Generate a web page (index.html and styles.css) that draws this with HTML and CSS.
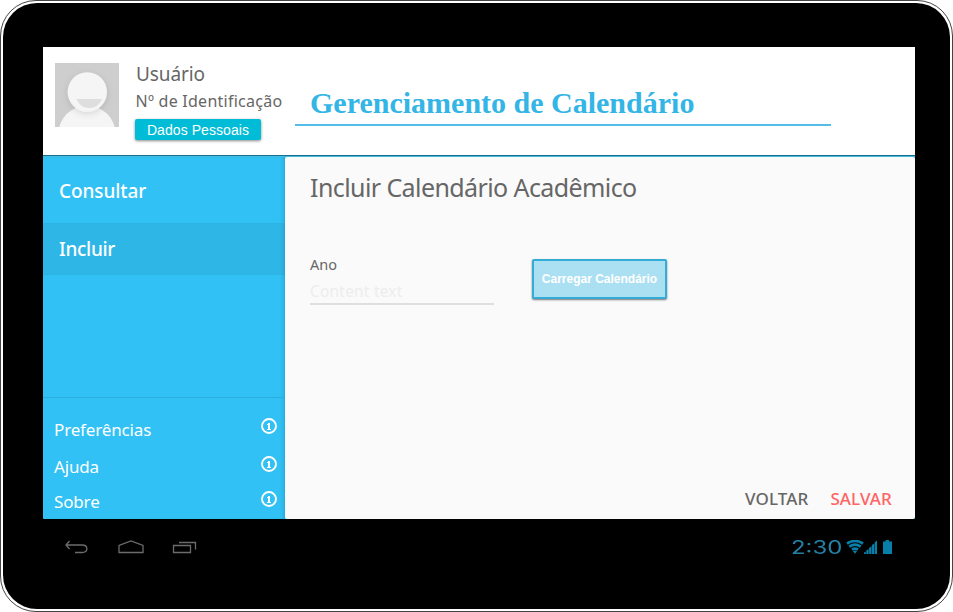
FILE: index.html
```html
<!DOCTYPE html>
<html lang="pt-BR">
<head>
<meta charset="utf-8">
<title>Gerenciamento de Calendário</title>
<link rel="stylesheet" href="styles.css">
</head>
<body>
<div class="device">
<div class="bezel">
  <div class="screen">
    <header class="header">
      <svg class="avatar" viewBox="0 0 64 64">
        <defs><filter id="soft" x="-20%" y="-20%" width="140%" height="150%"><feDropShadow dx="0" dy="2" stdDeviation="3" flood-opacity=".13"/></filter></defs>
        <rect width="64" height="64" fill="#cecece"/>
        <circle cx="32" cy="71" r="28.500" fill="#f5f5f5"/>
        <circle cx="32.300" cy="29" r="19.700" fill="#f5f5f5" filter="url(#soft)"/>
        <path d="M21.500 36h25.500c-2.500 5.800-7 9-12.700 9s-10.300-3.200-12.800-9z" fill="#dedede"/>
      </svg>
      <div class="user">
        <div class="user-name"><span>Usuário</span></div>
        <div class="user-id"><span>Nº de Identificação</span></div>
        <button class="personal">Dados Pessoais</button>
      </div>
      <h1 class="title"><span>Gerenciamento de Calendário</span></h1>
    </header>
    <main class="main">
      <nav class="sidebar">
        <a class="item">Consultar</a>
        <a class="item active">Incluir</a>
        <div class="links">
          <a class="link preferences"><span>Preferências</span><svg viewBox="0 0 16 16"><use href="#info"/></svg></a>
          <a class="link help"><span>Ajuda</span><svg viewBox="0 0 16 16"><use href="#info"/></svg></a>
          <a class="link about"><span>Sobre</span><svg viewBox="0 0 16 16"><use href="#info"/></svg></a>
        </div>
      </nav>
      <section class="panel">
        <h2 class="heading">Incluir Calendário Acadêmico</h2>
        <div class="form">
          <label class="field"><span class="label">Ano</span><span class="placeholder">Content text</span></label>
          <button class="upload">Carregar Calendário</button>
        </div>
        <div class="actions"><span class="back">VOLTAR</span><span class="save">SALVAR</span></div>
      </section>
    </main>
  </div>
  <footer class="system">
    <svg class="nav-icons" viewBox="0 0 134 20" fill="none" stroke="#6c6c6c" stroke-width="1.300">
      <path d="M5.500 4L2 8l3.500 4M2 8h16c6.500 0 6.500 7.500 0 7.500h-7"/>
      <path d="M55 15.500V8.500l12-4.500L79 8.500v7z"/>
      <path d="M109.500 8.500h17v7h-17zM115 5.500h16.500v7"/>
    </svg>
    <div class="status"><span class="clock">2:30</span>
      <svg class="status-icons" viewBox="0 0 46 14">
        <g fill="none" stroke="#087fa9" stroke-width="2.700"><path d="M1 3.500q8-5 16 0M3.300 6.600q5.700-4 11.400 0M6 9.600q3-2 6 0"/></g>
        <path d="M7 11.200q2-1.200 4 0l-2 2.600z" fill="#087fa9"/>
        <path d="M18 14v-1.500l1.800-1V14zM20.300 14v-3.500l2.300-1.500v5zM23.100 14V8l2.300-1.800V14zM25.900 14V5L28.200 3.500V14zM28.700 14V2.500L31 .5V14zM37 1.500h2.500V0H43v1.500h3V14h-9z" fill="#087fa9"/>
      </svg>
    </div>
  </footer>
</div>
</div>
<svg class="symbols"><symbol id="info" viewBox="0 0 16 16"><circle cx="8" cy="8" r="7" fill="none" stroke="#fff" stroke-width="1.900"/><path d="M7 5h2v6h1v1H6v-1h1V7H6V6h1z" fill="#fff"/></symbol></svg>
</body>
</html>
```

FILE: styles.css
```css
* { box-sizing: border-box; }
body { margin: 0; background: #fff; font-family: "Noto Sans", sans-serif; color: #666; }
h1, h2 { margin: 0; font-weight: 400; }
button { display: block; margin: 0; border: 0; padding: 0; color: #fff; font-family: "Liberation Sans", sans-serif; white-space: nowrap; }
span { white-space: nowrap; }
.device { width: 953px; height: 612px; padding: 2px; border: 1px solid #444; border-radius: 36px; background: #fff; }
.bezel { height: 100%; padding: 44px 35px 0 40px; border-radius: 34px; background: #000; }
.screen { width: 872px; height: 472px; display: flex; flex-direction: column; background: #fff; border-radius: 0 0 2px 2px; overflow: hidden; }
.header { height: 109px; flex: none; display: flex; padding: 16px 0 0 12px; border-bottom: 1px solid #16708f; }
.avatar { width: 64px; height: 64px; flex: none; }
.user { width: 160px; padding-left: 17px; }
.user-name { font-size: 19px; line-height: 24px; margin-top: -1px; letter-spacing: -.1px; }
.user-id { font-size: 16px; line-height: 22px; margin-top: 4px; letter-spacing: .25px; margin-left: -.5px; }
.personal { width: 126px; height: 21px; margin: 7px 0 0 -1px; padding-top: 1px; border-radius: 2px; background: #00bcd6; font-size: 14px; line-height: 20px; letter-spacing: .07px; box-shadow: 0 1px 3px #0007; }
.title { width: 536px; height: 63px; margin-left: 16px; padding: 23px 0 0 15px; border-bottom: 2px solid #53bee7; color: #33b5e5; font-family: "Liberation Serif", serif; font-size: 30px; font-weight: 700; line-height: 34px; }
.main { flex: 1; display: flex; min-height: 0; background: #31c1f5; border-top: 1px solid #48b9dd; }
.sidebar { width: 242px; flex: none; display: flex; flex-direction: column; padding-top: 14px; color: #fff; box-shadow: inset -4px 0 4px -3px #0864804d; }
.item { height: 52px; padding-left: 16px; font-size: 19px; line-height: 40px; font-weight: 500; letter-spacing: -.1px; }
.item.active { line-height: 52px; letter-spacing: -.3px; background: #2eb6e6; box-shadow: inset -4px 0 4px -3px #0864804d; }
.links { height: 122px; margin-top: auto; padding: 15px 8px 0 11px; border-top: 1px solid #2badde; }
.link { display: flex; justify-content: space-between; height: 37px; font-size: 17px; line-height: 34px; letter-spacing: -.15px; }
.link.help { height: 35px; }
.link svg { width: 16px; height: 16px; margin-top: 5px; }
.link.help svg, .link.about svg { margin-top: 6px; }
.panel { flex: 1; display: flex; flex-direction: column; padding: 12px 23px 7px 25px; border-radius: 2px; background: #fafafa; }
.heading { font-size: 25px; line-height: 36px; height: 36px; letter-spacing: -.59px; }
.form { display: flex; margin-top: 54px; }
.field { width: 184px; height: 46px; display: flex; flex-direction: column; border-bottom: 2px solid #dfdfdf; }
.label { font-size: 14.500px; line-height: 14px; margin-top: -2px; }
.placeholder { margin-top: 10px; color: #ededed; font-size: 15.500px; line-height: 20px; letter-spacing: .2px; }
.upload { width: 135px; height: 40px; margin-left: 38px; padding-bottom: 1px; border: 2px solid #35acd6; border-radius: 2px; background: #abdff2; font-size: 12px; font-weight: 700; box-shadow: 0 1px 2px #0008; }
.actions { display: flex; justify-content: flex-end; gap: 22px; margin-top: auto; font-size: 17px; line-height: 26px; font-weight: 500; letter-spacing: .12px; }
.save { color: #ff6464; }
.system { width: 872px; height: 40px; display: flex; justify-content: space-between; padding: 18px 23px 0 21px; }
.nav-icons { width: 134px; height: 20px; }
.status { display: flex; padding-top: 3px; }
.clock { width: 55px; color: #2480a4; font-family: Inter, sans-serif; font-weight: 400; font-size: 18px; line-height: 16px; transform: scaleX(1.33); transform-origin: left; }
.status-icons { width: 46px; height: 14px; }
.symbols { display: none; }
```
